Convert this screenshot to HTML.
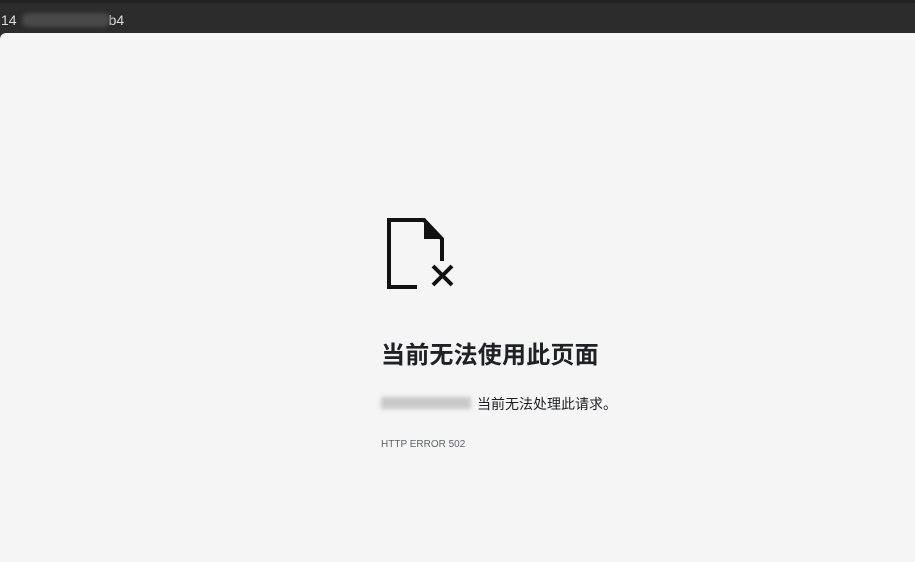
<!DOCTYPE html>
<html><head><meta charset="utf-8"><style>
html,body{margin:0;padding:0;width:915px;height:562px;overflow:hidden;background:#2b2b2b;font-family:"Liberation Sans","Noto Sans CJK SC",sans-serif}
.top{position:absolute;left:0;top:0;width:915px;height:33px;background:#2c2c2c;border-top:3px solid #222;box-sizing:border-box}
.title{position:absolute;left:1px;top:9px;font-size:14px;color:#ddd}
.blur1{position:absolute;left:22px;top:10px;width:88px;height:14px;background:#4a4a4a;border-radius:7px;filter:blur(2px)}
.page{position:absolute;left:0;top:33px;width:915px;height:529px;background:#f5f5f5;border-top-left-radius:6px}
h1{position:absolute;left:381px;top:302px;margin:0;font-size:24px;font-weight:bold;color:#202124;letter-spacing:0.2px;font-family:"Noto Sans CJK SC",sans-serif}
.msg{position:absolute;left:381px;top:361px;font-size:14px;color:#202124;font-family:"Noto Sans CJK SC",sans-serif}
.blur2{position:absolute;left:381px;top:364px;width:90px;height:12px;background:#c8c8c8;filter:blur(2px)}
.err{position:absolute;left:381px;top:406px;font-size:10px;color:#5f6368;font-weight:normal}
</style></head><body>
<div class="top"><div class="title">14<span style="display:inline-block;width:92px"></span>b4</div><div class="blur1"></div></div>
<div class="page">
<svg style="position:absolute;left:380px;top:176px" width="80" height="80" viewBox="0 0 80 80">
<path d="M37 78 H9 V11 H44 L62 30 V52" fill="none" stroke="#111" stroke-width="4"/>
<path d="M44 11 V30 H62 Z" fill="#111"/>
<path d="M53 57 L72 76 M72 57 L53 76" stroke="#111" stroke-width="4"/>
</svg>
<h1>当前无法使用此页面</h1>
<div class="blur2"></div>
<div class="msg"><span style="display:inline-block;width:96px"></span>当前无法处理此请求。</div>
<div class="err">HTTP ERROR 502</div>
</div>
</body></html>
